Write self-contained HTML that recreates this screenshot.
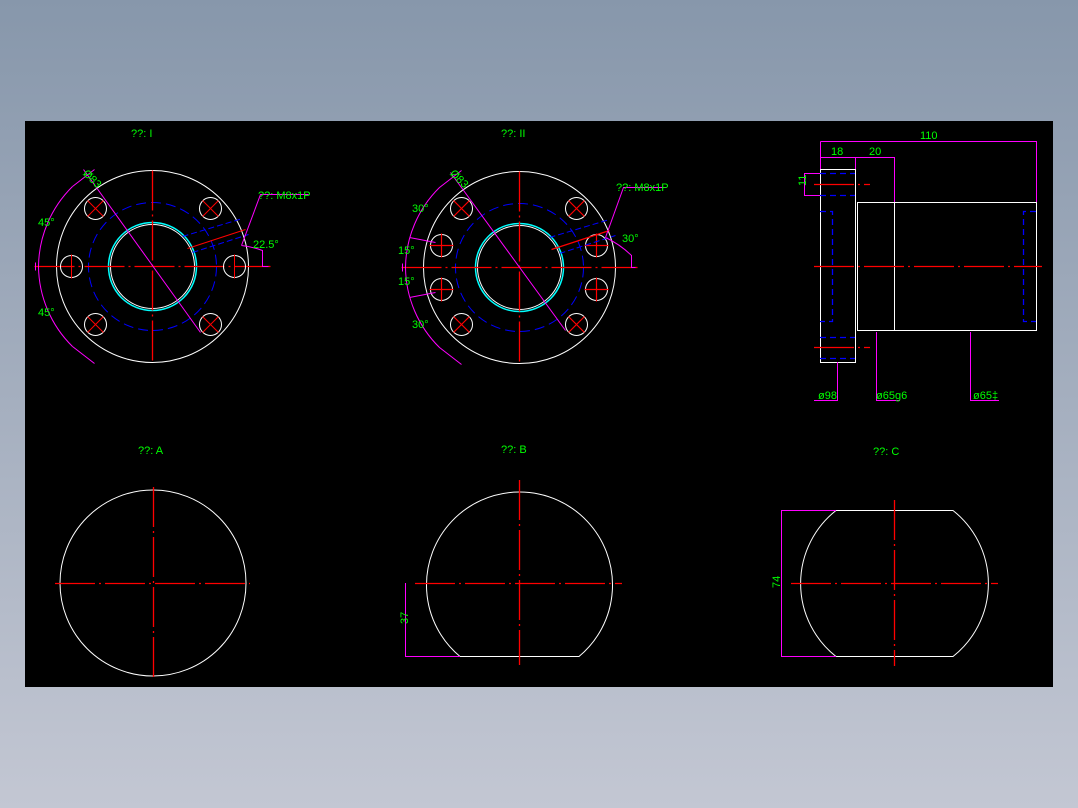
<!DOCTYPE html>
<html><head><meta charset="utf-8"><style>
html,body{margin:0;padding:0}
body{width:1078px;height:808px;background:linear-gradient(#8797ab,#c3c7d3);overflow:hidden}
svg{position:absolute;left:0;top:0}
text{font-family:"Liberation Sans",sans-serif;fill:#00ff00;font-size:11px}
.c{stroke:#ff0000;stroke-width:1.3;stroke-dasharray:40,4,2,4}
</style></head><body>
<svg width="1078" height="808" viewBox="0 0 1078 808">
<rect x="25" y="121" width="1028" height="566" fill="#000"/>
<g fill="none" stroke-width="1">
<!-- Flange I -->
<g transform="translate(152.5,266.5)">
<circle r="96" stroke="#fff"/>
<circle r="64" stroke="#00f" stroke-dasharray="10,5"/>
<circle r="44" stroke="#0ff" stroke-width="1.5"/>
<circle r="42" stroke="#fff"/>
<line x1="-118" y1="0" x2="118" y2="0" class="c"/>
<line x1="0" y1="-96" x2="0" y2="96" class="c"/>
<g stroke="#fff">
<circle cx="-57" cy="-58" r="11"/><circle cx="58" cy="-58" r="11"/>
<circle cx="-57" cy="58" r="11"/><circle cx="58" cy="58" r="11"/>
<circle cx="-81" cy="0" r="11"/><circle cx="82" cy="0" r="11"/>
</g>
<g stroke="#f00">
<path d="M-65,-66l16,16M-49,-66l-16,16M50,-66l16,16M66,-66l-16,16M-65,50l16,16M-49,50l-16,16M50,50l16,16M66,50l-16,16M-81,-12v24M82,-12v24"/>
<path d="M35,-18l58,-19"/>
</g>
<path d="M30,-30l60,-18M40,-14l56,-18" stroke="#00f" stroke-dasharray="6,3"/>
<path d="M-69,-97L48,66" stroke="#f0f"/>
<path d="M-114,0A114,114 0 0 1 -80,-80M-114,0A114,114 0 0 0 -80,80M-117,-4v8" stroke="#f0f"/>
<path d="M-80,-80l22,-17M-80,80l22,17" stroke="#f0f"/>
<path d="M89,-21L108,-72H156M89,-21A90,90 0 0 1 110,-16V0H116" stroke="#f0f"/>
</g>
<!-- Flange II -->
<g transform="translate(519.5,267.5)">
<circle r="96" stroke="#fff"/>
<circle r="64" stroke="#00f" stroke-dasharray="10,5"/>
<circle r="44" stroke="#0ff" stroke-width="1.5"/>
<circle r="42" stroke="#fff"/>
<line x1="-118" y1="0" x2="118" y2="0" class="c"/>
<line x1="0" y1="-96" x2="0" y2="96" class="c"/>
<g stroke="#fff">
<circle cx="-58" cy="-59" r="11"/><circle cx="57" cy="-59" r="11"/>
<circle cx="-58" cy="57" r="11"/><circle cx="57" cy="57" r="11"/>
<circle cx="-78" cy="-22" r="11"/><circle cx="77" cy="-22" r="11"/>
<circle cx="-78" cy="22" r="11"/><circle cx="77" cy="22" r="11"/>
</g>
<g stroke="#f00" stroke-width="1.2">
<path d="M-66,-67l16,16M-50,-67l-16,16M49,-67l16,16M65,-67l-16,16M-66,49l16,16M-50,49l-16,16M49,49l16,16M65,49l-16,16"/>
<path d="M-90,-22h24M-78,-34v24M-90,22h24M-78,10v24M65,-22h24M77,-34v24M65,22h24M77,10v24"/>
<path d="M32,-18l58,-19"/>
</g>
<path d="M30,-30l60,-18M40,-14l56,-18" stroke="#00f" stroke-dasharray="6,3"/>
<path d="M-69,-95L46,63" stroke="#f0f"/>
<path d="M-114,0A114,114 0 0 1 -80,-80M-114,0A114,114 0 0 0 -80,80M-117,-4v8M-80,-80l22,-17M-80,80l22,17M-110,-30l26,5M-110,30l26,-5" stroke="#f0f"/>
<path d="M86,-30L104,-80H147M86,-30A95,95 0 0 1 112,-12V0H116" stroke="#f0f"/>
</g>
<!-- Side view -->
<g stroke="#fff">
<rect x="820.5" y="169.5" width="35" height="193"/>
<rect x="857.5" y="202.5" width="179" height="128"/>
<line x1="894.5" y1="202" x2="894.5" y2="330"/>
</g>
<g stroke="#00f" stroke-dasharray="6,4" stroke-width="1.3">
<path d="M820,173.5h35M820,195.5h35M820,337.5h35M820,358.5h35"/>
<path d="M820,211.5h12.5v110h-12.5M1036,211.5h-12.5v110h12.5"/>
</g>
<path d="M814,266.5H1042M814,184.5h56M814,347.5h56" class="c"/>
<g stroke="#f0f">
<path d="M820.5,141.5H1036.5V202M820.5,141.5V169M820.5,157.5H894.5V202M855.5,157.5V169"/>
<path d="M820,173.5H804.5V195.5H820"/>
<path d="M837.5,362V400.5H814M876.5,332V400.5H900M970.5,332V400.5H999"/>
</g>
<!-- Bottom A -->
<circle cx="153" cy="583" r="93" stroke="#fff"/>
<path d="M55,583.5H250M153.5,487V680" class="c"/>
<!-- B -->
<path d="M460,656.5A93,93 0 1 1 579,656.5Z" stroke="#fff"/>
<path d="M415,583.5H622M519.5,480V665" class="c"/>
<path d="M405.5,583V656.5H460" stroke="#f0f"/>
<!-- C -->
<path d="M836,510.5H953A93,93 0 0 1 953,656.5H836A93,93 0 0 1 836,510.5Z" stroke="#fff"/>
<path d="M791,583.5H998M894.5,500V666" class="c"/>
<path d="M836,510.5H781.5V656.5H836" stroke="#f0f"/>
</g>
<text x="131" y="137" font-size="12">??: I</text>
<text x="501" y="137" font-size="12">??: II</text>
<text x="138" y="454" font-size="12">??: A</text>
<text x="501" y="453" font-size="12">??: B</text>
<text x="873" y="455" font-size="12">??: C</text>
<text x="258" y="199">??: M8x1P</text>
<text x="616" y="191">??: M8x1P</text>
<text x="38" y="226" font-size="10">45°</text>
<text x="38" y="316" font-size="10">45°</text>
<text x="253" y="248" font-size="10">22.5°</text>
<text x="412" y="212" font-size="10">30°</text>
<text x="398" y="254" font-size="10">15°</text>
<text x="398" y="285" font-size="10">15°</text>
<text x="412" y="328" font-size="10">30°</text>
<text x="622" y="242" font-size="10">30°</text>
<text x="84" y="178" font-size="10" transform="rotate(45 88 174)">Ø83</text>
<text x="451" y="178" font-size="10" transform="rotate(45 455 174)">Ø83</text>
<text x="920" y="139" font-size="10">110</text>
<text x="831" y="155" font-size="10">18</text>
<text x="869" y="155" font-size="10">20</text>
<text x="802" y="190" font-size="10" transform="rotate(-90 802 186)">11</text>
<text x="818" y="399" font-size="10">ø98</text>
<text x="876" y="399" font-size="10">ø65g6</text>
<text x="973" y="399" font-size="10">ø65‡</text>
<text x="399" y="625" font-size="10" transform="rotate(-90 403 620)">37</text>
<text x="772" y="588" font-size="10" transform="rotate(-90 776 584)">74</text>
</svg>
</body></html>
